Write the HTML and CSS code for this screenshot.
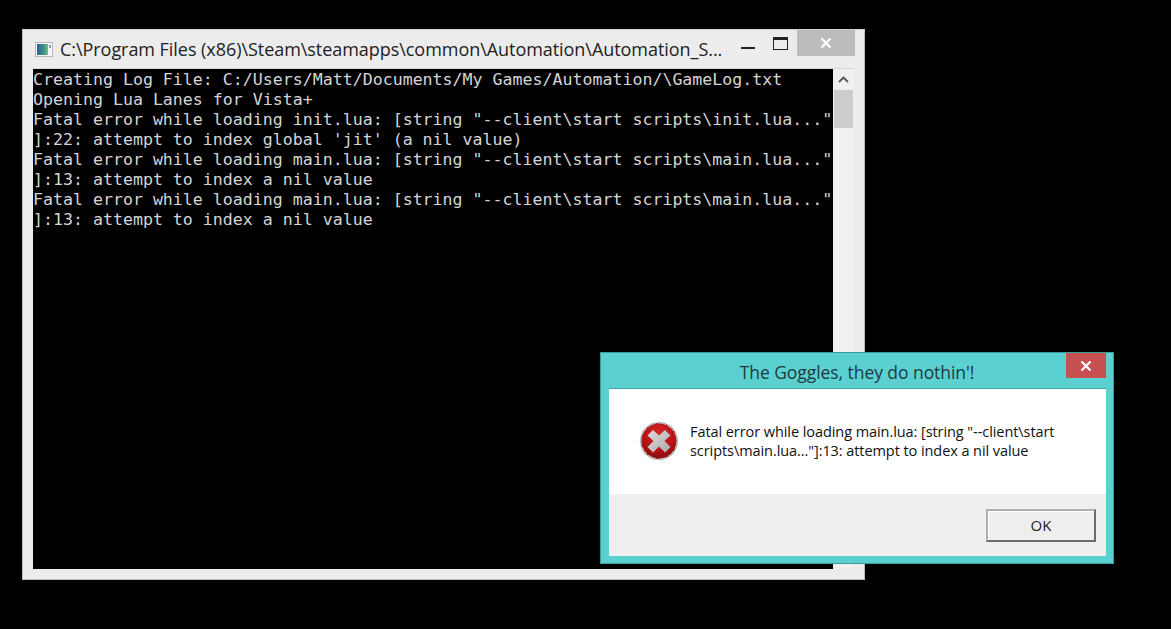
FILE: index.html
```html
<!DOCTYPE html>
<html lang="en">
<head>
<meta charset="utf-8">
<title>Automation console</title>
<link rel="stylesheet" href="styles.css">
</head>
<body>
<section class="console-window">
  <header class="titlebar">
    <svg class="app-icon" width="18" height="15" viewBox="0 0 18 15"><defs><linearGradient id="ico" x1="0" y1="0" x2="1" y2="0"><stop offset="0" stop-color="#2f5f8f"/><stop offset=".6" stop-color="#3f8f88"/><stop offset="1" stop-color="#6fc08f"/></linearGradient></defs><rect x=".5" y=".5" width="17" height="14" fill="#f6f6f6" stroke="#b8b8b8"/><rect x="2" y="2" width="11" height="11" fill="url(#ico)"/><rect x="14" y="3" width="2" height="3" fill="#7aa8a8"/></svg>
    <span class="title-text">C:\Program Files (x86)\Steam\steamapps\common\Automation\Automation_S...</span>
    <div class="caption">
      <span class="min-btn"></span>
      <span class="max-btn"></span>
      <span class="close-btn"><svg width="12" height="10" viewBox="0 0 12 10"><path d="M1.500 .5 10.500 9.500M10.500 .5 1.500 9.500" stroke="#fff" stroke-width="2.200" fill="none"/></svg></span>
    </div>
  </header>
  <div class="client">
    <pre class="console">Creating Log File: C:/Users/Matt/Documents/My Games/Automation/\GameLog.txt
Opening Lua Lanes for Vista+
Fatal error while loading init.lua: [string "--client\start scripts\init.lua..."
]:22: attempt to index global 'jit' (a nil value)
Fatal error while loading main.lua: [string "--client\start scripts\main.lua..."
]:13: attempt to index a nil value
Fatal error while loading main.lua: [string "--client\start scripts\main.lua..."
]:13: attempt to index a nil value</pre>
    <div class="scrollbar">
      <svg class="arrow" width="21" height="21" viewBox="0 0 21 21"><path d="M6 13 10.500 8.500 15 13" fill="none" stroke="#555" stroke-width="1.800"/></svg>
      <div class="thumb"></div>
    </div>
  </div>
</section>

<section class="dialog">
  <header class="dialog-title">
    <span class="dialog-title-text">The Goggles, they do nothin'!</span>
    <span class="dialog-close"><svg width="12" height="10" viewBox="0 0 12 10"><path d="M1.500 .5 10.500 9.500M10.500 .5 1.500 9.500" stroke="#fff" stroke-width="2.200" fill="none"/></svg></span>
  </header>
  <div class="dialog-client">
    <div class="dialog-body">
      <svg class="error-icon" width="40" height="40" viewBox="0 0 40 40">
        <defs>
          <radialGradient id="red" cx="50%" cy="30%" r="70%"><stop offset="0" stop-color="#d8262a"/><stop offset=".6" stop-color="#b81216"/><stop offset="1" stop-color="#8a0b0f"/></radialGradient>
          <linearGradient id="cross" x1="0" y1="0" x2="1" y2="1"><stop offset="0" stop-color="#dcdcdc"/><stop offset="1" stop-color="#aaaaaa"/></linearGradient>
        </defs>
        <circle cx="20" cy="20" r="18.300" fill="url(#red)" stroke="#b8b8b8" stroke-width="1.800" stroke-dasharray="9 1.500"/>
        <path d="M14 9 20 14.500 26 9 31.500 14.500 25.500 20 31.500 26 26 31.500 20 25.500 14 31.500 8.500 26 14.500 20 8.500 14.500Z" fill="url(#cross)"/>
      </svg>
      <p class="message">Fatal error while loading main.lua: [string "--client\start scripts\main.lua..."]:13: attempt to index a nil value</p>
    </div>
    <footer class="dialog-footer">
      <button class="ok-btn" type="button">OK</button>
    </footer>
  </div>
</section>
</body>
</html>
```
FILE: styles.css
```css
html, body {
  margin: 0;
  height: 100%;
  background: #000;
  overflow: hidden;
}
body {
  position: relative;
  width: 1171px;
  height: 629px;
}
.console-window {
  position: absolute;
  left: 22px;
  top: 29px;
  width: 843px;
  height: 551px;
  box-sizing: border-box;
  border: 1px solid #bdbdbd;
  border-top-color: #d0d0d0;
  background: #ececec;
  display: flex;
  flex-direction: column;
}
.titlebar {
  height: 38px;
  flex: none;
  display: flex;
  align-items: flex-start;
  position: relative;
}
.app-icon {
  margin: 12px 0 0 12px;
  flex: none;
}
.title-text {
  margin: 5px 0 0 7px;
  font: 18px/28px "Open Sans", "Noto Sans", sans-serif;
  letter-spacing: -.05px;
  color: #222;
  white-space: nowrap;
}
.caption {
  position: absolute;
  right: 9px;
  top: 0;
  display: flex;
  align-items: flex-start;
}
.min-btn {
  width: 14px;
  height: 2px;
  background: #222;
  margin: 17px 18px 0 0;
}
.max-btn {
  width: 13px;
  height: 9px;
  border: 1px solid #222;
  border-top-width: 3px;
  margin: 7px 9px 0 0;
}
.close-btn {
  width: 58px;
  height: 26px;
  background: #bcbcbc;
  display: flex;
  align-items: center;
  justify-content: center;
}
.client {
  margin: 0 10px 10px 10px;
  flex: 1;
  min-height: 0;
  display: flex;
  border-top: 1px solid #d8d8d8;
}
.console {
  margin: 0;
  padding-top: 1px;
  flex: 1;
  background: #000;
  color: #d4d4d4;
  font: 16.600px/20px "DejaVu Sans Mono", monospace;
  white-space: pre;
}
.scrollbar {
  width: 21px;
  flex: none;
  background: #f0f0f0;
}
.arrow {
  display: block;
}
.thumb {
  width: 19px;
  height: 38px;
  margin-left: 1px;
  background: #cdcdcd;
}
.dialog {
  position: absolute;
  left: 600px;
  top: 352px;
  width: 514px;
  height: 212px;
  box-sizing: border-box;
  border: 1px solid #3f9c9c;
  background: #5bd0d0;
  display: flex;
  flex-direction: column;
}
.dialog-title {
  height: 35px;
  flex: none;
  position: relative;
  text-align: center;
}
.dialog-title-text {
  font: 17.500px/38px "Open Sans", "Noto Sans", sans-serif;
  letter-spacing: -.06px;
  color: #1d3b40;
}
.dialog-close {
  position: absolute;
  right: 7px;
  top: 0;
  width: 40px;
  height: 25px;
  background: #c75050;
  display: flex;
  align-items: center;
  justify-content: center;
}
.dialog-client {
  flex: 1;
  margin: 0 7px 7px 8px;
  background: #fff;
  border-top: 1px solid #3fa5a5;
  display: flex;
  flex-direction: column;
  min-height: 0;
}
.dialog-body {
  height: 105px;
  flex: none;
  display: flex;
  align-items: flex-start;
  box-sizing: border-box;
  padding: 33px 30px 0 30px;
}
.error-icon {
  flex: none;
  margin: -1px 11px 0 0;
}
.message {
  margin: 0;
  width: 390px;
  font: 14.500px/19px "Open Sans", "Noto Sans", sans-serif;
  letter-spacing: -.07px;
  color: #111;
}
.dialog-footer {
  flex: 1;
  background: #efefef;
  display: flex;
  justify-content: flex-end;
  align-items: flex-start;
  padding: 15px 10px 0 0;
}
.ok-btn {
  width: 110px;
  height: 33px;
  box-sizing: border-box;
  background: #eeeeee;
  border: 2px solid;
  border-color: #b0b0b0 #6c6c6c #6c6c6c #b0b0b0;
  box-shadow: inset 1px 1px 0 #fff;
  font: 15px/26px "Open Sans", "Noto Sans", sans-serif;
  color: #222;
  padding: 0 0 2px;
}
```
